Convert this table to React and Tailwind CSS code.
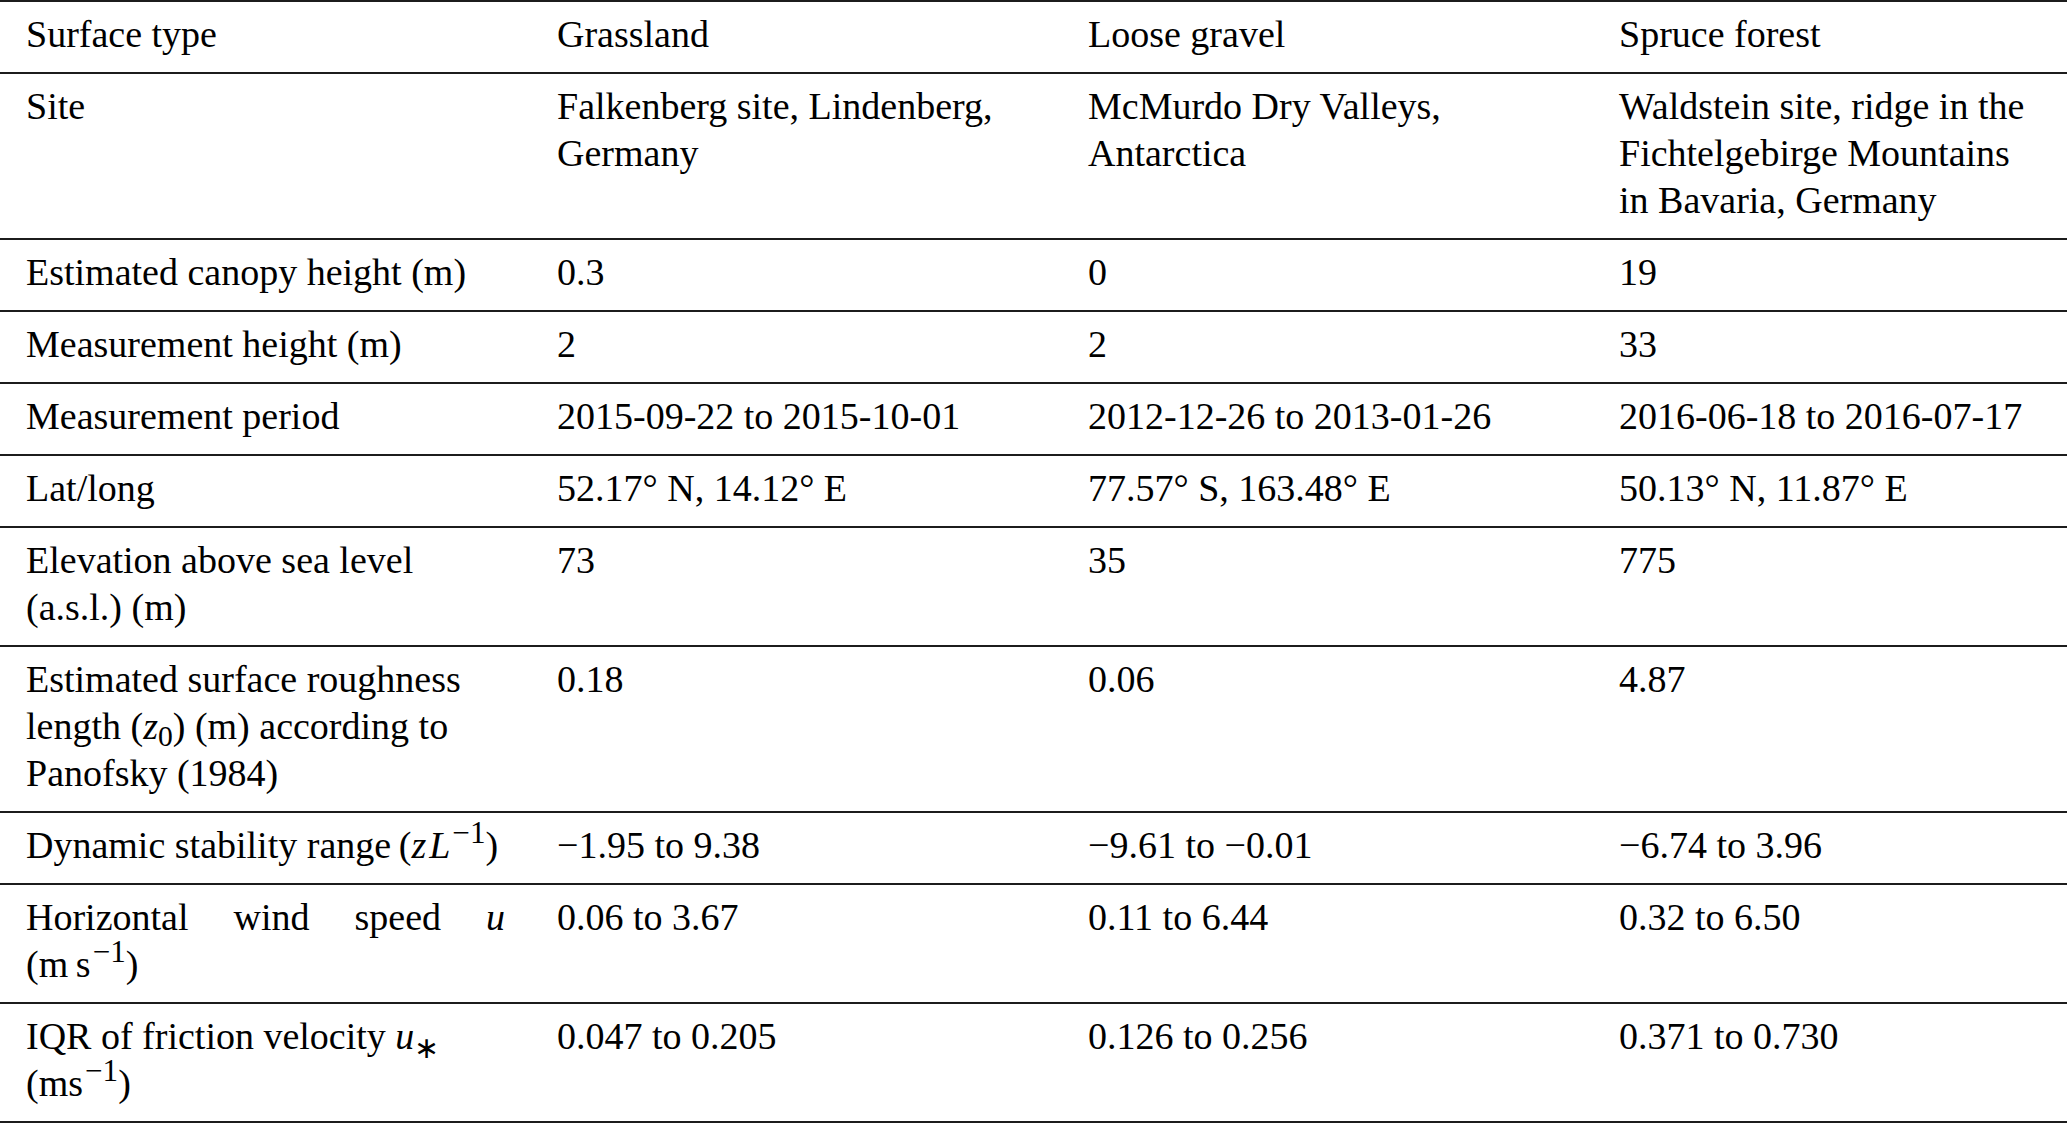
import React from 'react';

const minus = '\u2212';

function Z0() {
  return (
    <>
      (<i>z</i>
      <sub className="bottom-[-0.22em] text-[0.78em]">0</sub>)
    </>
  );
}

function Inv({ children }) {
  return (
    <>
      {children}
      <sup className="top-[-0.48em] ml-[2px] text-[0.82em]">{minus}1</sup>
    </>
  );
}

const rows = [
  {
    label: ['Surface type'],
    cells: [['Grassland'], ['Loose gravel'], ['Spruce forest']],
  },
  {
    label: ['Site'],
    cells: [
      ['Falkenberg site, Lindenberg,', 'Germany'],
      ['McMurdo Dry Valleys,', 'Antarctica'],
      ['Waldstein site, ridge in the', 'Fichtelgebirge Mountains', 'in Bavaria, Germany'],
    ],
  },
  { label: ['Estimated canopy height (m)'], cells: [['0.3'], ['0'], ['19']] },
  { label: ['Measurement height (m)'], cells: [['2'], ['2'], ['33']] },
  {
    label: ['Measurement period'],
    cells: [['2015-09-22 to 2015-10-01'], ['2012-12-26 to 2013-01-26'], ['2016-06-18 to 2016-07-17']],
  },
  {
    label: ['Lat/long'],
    cells: [['52.17° N, 14.12° E'], ['77.57° S, 163.48° E'], ['50.13° N, 11.87° E']],
  },
  {
    label: ['Elevation above sea level', '(a.s.l.) (m)'],
    cells: [['73'], ['35'], ['775']],
  },
  {
    label: [
      'Estimated surface roughness',
      <>
        length <Z0 /> (m) according to
      </>,
      'Panofsky (1984)',
    ],
    cells: [['0.18'], ['0.06'], ['4.87']],
  },
  {
    label: [
      <>
        Dynamic stability range{'\u2009'}(<i>z</i>
        <i className="ml-[3px]">L</i>
        <Inv />)
      </>,
    ],
    cells: [[`${minus}1.95 to 9.38`], [`${minus}9.61 to ${minus}0.01`], [`${minus}6.74 to 3.96`]],
  },
  {
    label: [
      <span className="block text-justify [text-align-last:justify]">
        Horizontal wind speed <i>u</i>
      </span>,
      <>
        (m{'\u2009'}s
        <Inv />)
      </>,
    ],
    cells: [['0.06 to 3.67'], ['0.11 to 6.44'], ['0.32 to 6.50']],
  },
  {
    label: [
      <>
        IQR of friction velocity <i>u</i>
        <sub className="bottom-[-0.3em] text-[0.8em]">∗</sub>
      </>,
      <>
        (ms
        <Inv />)
      </>,
    ],
    cells: [['0.047 to 0.205'], ['0.126 to 0.256'], ['0.371 to 0.730']],
  },
];

function Cell({ lines, first }) {
  return (
    <div className={first ? 'pl-[26px] pr-[26px]' : 'pl-[26px] pr-2'}>
      {lines.map((line, i) => (
        <div key={i} className="whitespace-nowrap">
          {line}
        </div>
      ))}
    </div>
  );
}

export default function App() {
  return (
    <div
      className="min-h-screen w-[2067px] bg-white text-[38px] leading-[47px] text-black"
      style={{ fontFamily: '"Liberation Serif", "Times New Roman", serif' }}
    >
      <div className="border-t-2 border-[#1c1c1c]">
        {rows.map((row, i) => (
          <div
            key={i}
            className="grid grid-cols-[531px_531px_531px_1fr] border-b-2 border-[#1c1c1c] pt-[9px] pb-[14px]"
          >
            <Cell lines={row.label} first />
            {row.cells.map((c, j) => (
              <Cell key={j} lines={c} />
            ))}
          </div>
        ))}
      </div>
    </div>
  );
}
